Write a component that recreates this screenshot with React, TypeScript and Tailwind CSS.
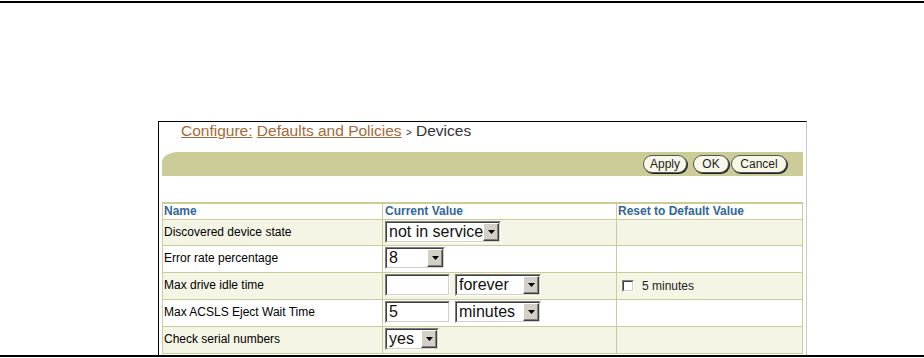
import React from 'react';

const tan = 'border-[#cccc99]';

function Arrow() {
  return (
    <svg width="7" height="4" viewBox="0 0 7 4">
      <polygon points="0,0 7,0 3.5,4" fill="#000" />
    </svg>
  );
}

function Select({ width, text }: { width: string; text: string }) {
  return (
    <div className={`${width} h-[22px] border border-[#808080] border-r-white border-b-white`}>
      <div className="flex h-full border border-[#404040] border-r-[#d4d0c8] border-b-[#d4d0c8] bg-white">
        <span className="flex-1 overflow-hidden whitespace-nowrap pl-[2px] text-[16px] leading-[18px] text-[#111]">{text}</span>
        <span className="flex w-[16px] shrink-0 items-center justify-center border border-white border-r-[#404040] border-b-[#404040] bg-[#d4d0c8] shadow-[inset_-1px_-1px_0_#808080]">
          <Arrow />
        </span>
      </div>
    </div>
  );
}

function TextInput({ value }: { value: string }) {
  return (
    <div className="w-[65px] h-[22px] border border-[#808080] border-r-white border-b-white">
      <div className="h-full border border-[#404040] border-r-[#d4d0c8] border-b-[#d4d0c8] bg-white pl-[2px] text-[16px] leading-[18px] text-[#111]">
        {value}
      </div>
    </div>
  );
}

function Button({ label, width }: { label: string; width: string }) {
  return (
    <button
      className={`${width} h-[18px] rounded-full border border-[#555] bg-[#f8f8e8] text-[12px] leading-[16px] text-[#222] shadow-[1px_1px_0_#222]`}
    >
      {label}
    </button>
  );
}

const rows = [
  { name: 'Discovered device state', h: 'h-[25px]', band: true, value: <Select width="w-[116px]" text="not in service" /> },
  { name: 'Error rate percentage', h: 'h-[26px]', band: false, value: <Select width="w-[60px]" text="8" /> },
  {
    name: 'Max drive idle time',
    h: 'h-[26px]',
    band: true,
    value: (
      <div className="flex gap-[5px]">
        <TextInput value="" />
        <Select width="w-[86px]" text="forever" />
      </div>
    ),
    reset: true,
  },
  {
    name: 'Max ACSLS Eject Wait Time',
    h: 'h-[26px]',
    band: false,
    value: (
      <div className="flex gap-[5px]">
        <TextInput value="5" />
        <Select width="w-[86px]" text="minutes" />
      </div>
    ),
  },
  { name: 'Check serial numbers', h: 'h-[26px]', band: true, value: <Select width="w-[54px]" text="yes" /> },
];

export default function App() {
  return (
    <div className="w-[924px] h-[358px] overflow-hidden bg-white font-['Liberation_Sans',Arial,sans-serif]">
      <div className="h-px" />
      <div className="h-[2px] bg-black" />
      <div className="h-[118px]" />

      {/* Frame */}
      <div className="ml-[158px] w-[649px] h-[234px] border-t border-l border-r border-black border-r-[#c8c8c8]">
        {/* Breadcrumb */}
        <div className="h-[18px] pl-[22px] text-[15.5px] leading-[18px] whitespace-nowrap">
          <a className="text-[#a36a3a] underline">Configure:</a>{' '}
          <a className="text-[#a36a3a] underline">Defaults and Policies</a>{' '}
          <span className="text-[10px] text-[#333]">&gt;</span>{' '}
          <span className="text-[#333]">Devices</span>
        </div>

        {/* Title bar with buttons */}
        <div className="mt-[12px] ml-[3px] w-[641px] h-[24px] bg-[#cccc99] rounded-tl-[16px_10px] flex items-center justify-end pr-[16px]">
          <Button label="Apply" width="w-[44px]" />
          <div className="w-[6px]" />
          <Button label="OK" width="w-[36px]" />
          <div className="w-[2px]" />
          <Button label="Cancel" width="w-[56px]" />
        </div>

        {/* Table */}
        <div className={`mt-[26px] ml-[3px] w-[641px] border-l border-r border-t-2 ${tan}`}>
          <div className={`grid grid-cols-[220px_234px_185px] border-b ${tan} bg-white text-[12px] font-bold leading-[15px] text-[#336699]`}>
            <div className={`h-[15px] pl-px border-r ${tan}`}>Name</div>
            <div className={`h-[15px] pl-[2px] border-r ${tan}`}>Current Value</div>
            <div className="h-[15px] pl-px">Reset to Default Value</div>
          </div>
          {rows.map((r) => (
            <div
              key={r.name}
              className={`grid grid-cols-[220px_234px_185px] border-b ${tan} ${r.band ? 'bg-[#f5f5e6]' : 'bg-white'} text-[12px] text-black`}
            >
              <div className={`${r.h} pl-px pt-[5px] leading-[14px] border-r ${tan}`}>{r.name}</div>
              <div className={`${r.h} pl-[2px] pt-px border-r ${tan}`}>{r.value}</div>
              <div className={`${r.h} pl-[5px] pt-[6px]`}>
                {r.reset && (
                  <div className="flex items-center gap-[8px]">
                    <div className="w-[12px] h-[12px] border border-[#808080] border-r-white border-b-white">
                      <div className="h-full border border-[#404040] border-r-[#d4d0c8] border-b-[#d4d0c8] bg-white" />
                    </div>
                    <span className="text-[12px] leading-[14px] text-[#222]">5 minutes</span>
                  </div>
                )}
              </div>
            </div>
          ))}
        </div>
      </div>

      <div className="h-[2px] bg-black" />
    </div>
  );
}
